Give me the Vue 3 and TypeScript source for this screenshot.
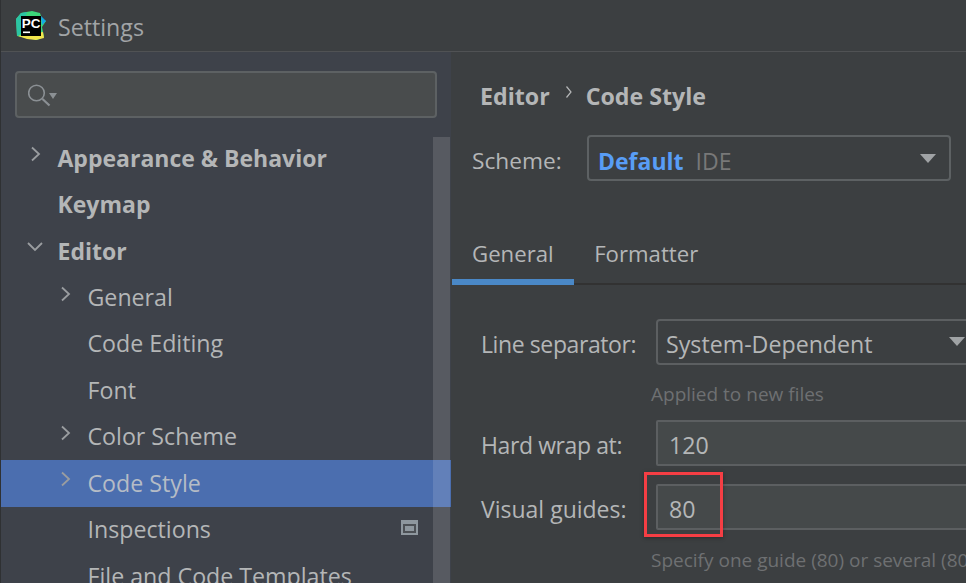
<script setup lang="ts">
interface NavItem { label: string; depth: number; bold?: boolean; arrow?: 'right' | 'down'; selected?: boolean; badge?: boolean }
const items: NavItem[] = [
  { label: 'Appearance & Behavior', depth: 0, bold: true, arrow: 'right' },
  { label: 'Keymap', depth: 0, bold: true },
  { label: 'Editor', depth: 0, bold: true, arrow: 'down' },
  { label: 'General', depth: 1, arrow: 'right' },
  { label: 'Code Editing', depth: 1 },
  { label: 'Font', depth: 1 },
  { label: 'Color Scheme', depth: 1, arrow: 'right' },
  { label: 'Code Style', depth: 1, arrow: 'right', selected: true },
  { label: 'Inspections', depth: 1, badge: true },
  { label: 'File and Code Templates', depth: 1 },
]
</script>

<template>
  <div class="window">
    <header class="titlebar">
      <svg class="logo" width="32" height="32" viewBox="0 0 32 32">
        <path d="M1 9 L6 3 L17 1 L25 3 L27 9 L31 11 L27 17 L29 27 L22 30 L12 28 L2 26 Z" fill="#3bd67a" />
        <path d="M1 9 L6 3 L12 2 L9 12 L6 24 L2 26 Z" fill="#2cc4a4" />
        <path d="M3 26 L14 24 L28 22 L29 28 L21 30 L12 29 Z" fill="#f2e44b" />
        <path d="M26 6 L31 11 L27 15 Z" fill="#12a8e8" />
        <rect x="6" y="6" width="20" height="20" fill="#000" />
        <text x="6.8" y="18" class="logo-text">PC</text>
        <rect x="8" y="21.5" width="7" height="1.6" fill="#fff" />
      </svg>
      <span class="title">Settings</span>
    </header>
    <div class="body">
      <aside class="sidebar">
        <div class="search">
          <svg width="30" height="24" viewBox="0 0 30 24" fill="none">
            <circle cx="8.5" cy="10" r="7.8" stroke="#8b9094" stroke-width="1.6" />
            <path d="M14.5 16 L21.5 22.5" stroke="#8b9094" stroke-width="2.2" />
            <path d="M21 10 H29 L25 16 Z" fill="#8b9094" />
          </svg>
        </div>
        <nav class="tree">
          <div v-for="item in items" :key="item.label" class="row" :class="{ selected: item.selected, bold: item.bold, nested: item.depth === 1 }">
            <span class="arrow">
              <svg v-if="item.arrow === 'right'" width="12" height="16" viewBox="0 0 12 16" fill="none"><path d="M2 1.5 L9 8 L2 14.5" stroke="#9a9da0" stroke-width="1.8" /></svg>
              <svg v-if="item.arrow === 'down'" class="down" width="16" height="12" viewBox="0 0 16 12" fill="none"><path d="M1 2 L8 9 L15 2" stroke="#9a9da0" stroke-width="1.8" /></svg>
            </span>
            <span class="label">{{ item.label }}</span>
            <span v-if="item.badge" class="badge"><i></i></span>
          </div>
        </nav>
        <div class="scrollbar"></div>
      </aside>
      <main class="content">
        <div class="crumbs">
          <span>Editor</span>
          <svg width="8" height="14" viewBox="0 0 8 14" fill="none"><path d="M1.5 1.5 L6 7 L1.5 12.5" stroke="#b5b7b8" stroke-width="1.2" /></svg>
          <span>Code Style</span>
        </div>
        <div class="scheme">
          <span class="scheme-label">Scheme:</span>
          <div class="scheme-box">
            <b>Default</b><span class="ide">IDE</span>
            <span class="caret"></span>
          </div>
        </div>
        <div class="tabs">
          <span class="tab active">General</span>
          <span class="tab">Formatter</span>
        </div>
        <section class="form">
          <label class="tight">Line separator:</label>
          <div class="field select">System-Dependent<span class="caret"></span></div>
          <p class="hint">Applied to new files</p>
          <label class="tight">Hard wrap at:</label>
          <div class="field input">120</div>
          <label class="visual">Visual guides:</label>
          <div class="field input visual">
            <span>80</span>
            <span class="highlight"></span>
          </div>
          <p class="hint last">Specify one guide (80) or several (80,</p>
        </section>
      </main>
    </div>
  </div>
</template>

<style>
html, body { margin: 0; height: 100%; overflow: hidden; background: #3c3f41; }
</style>

<style scoped>
.window {
  width: 966px; height: 583px; overflow: hidden; display: flex; flex-direction: column;
  background: #3c3f41; color: #b4b6b7; border-left: 1px solid #2f3133; box-sizing: border-box;
  font-family: "Open Sans", "Noto Sans", sans-serif; font-size: 23px;
}
.titlebar { height: 52px; flex: none; box-sizing: border-box; border-bottom: 1px solid #505254; display: flex; align-items: center; padding: 0 0 0 14px; }
.logo { flex: none; }
.logo-text { font: 700 13.5px "Liberation Sans", sans-serif; fill: #fff; }
.title { margin-left: 11px; font-size: 23.2px; color: #a2a5a7; margin-top: 2px; }
.body { flex: 1; display: flex; min-height: 0; }
.sidebar { width: 450px; flex: none; position: relative; background: #3e424a; padding-top: 19px; box-sizing: border-box; overflow: hidden; }
.search { margin-left: 14px; width: 422px; height: 47px; box-sizing: border-box; border: 2px solid #5d6163; border-radius: 4px; background: #494c4d; display: flex; align-items: center; padding-left: 11px; }
.tree { margin-top: 17px; }
.row { height: 46.45px; display: flex; align-items: center; position: relative; padding-left: 29px; white-space: nowrap; }
.row.nested { padding-left: 59px; font-size: 23.2px; }
.row.selected { background: #4b6eaf; }
.row.bold .label { font-weight: 700; margin-top: -1px; }
.arrow { width: 27.5px; flex: none; display: flex; align-items: center; margin-top: -8px; }
.down { margin-left: -3px; }
.label { color: #b4b6b7; margin-top: -1px; }
.selected .label { color: #b5bcc6; }
.badge { position: absolute; left: 400px; top: 13px; width: 17px; height: 15px; background: #8e979e; display: flex; align-items: flex-end; justify-content: center; padding-bottom: 2px; box-sizing: border-box; }
.badge i { display: block; width: 13px; height: 9px; box-sizing: border-box; background: #8e979e; border: 2px solid #4c5055; }
.scrollbar { position: absolute; left: 432px; top: 85px; width: 17px; bottom: 0; background: rgba(255, 255, 255, 0.13); }
.content { flex: 1; min-width: 0; padding-top: 26px; }
.crumbs { display: flex; align-items: center; padding-left: 29px; font-weight: 700; font-size: 23.2px; line-height: 36px; }
.crumbs svg { margin: -8px 13px 0 15px; }
.scheme { display: flex; align-items: center; padding-left: 21px; margin-top: 21px; }
.scheme-label { width: 115px; flex: none; font-size: 22.7px; padding-top: 5px; }
.scheme-box { width: 364px; height: 46px; box-sizing: border-box; border: 2px solid #5d6163; border-radius: 4px; position: relative; display: flex; align-items: center; padding: 5px 0 0 9px; }
.scheme-box b { color: #589df6; }
.ide { color: #787878; margin-left: 12px; }
.caret { position: absolute; right: 13px; top: 17px; width: 0; height: 0; border-left: 8px solid transparent; border-right: 8px solid transparent; border-top: 9px solid #a0a3a5; }
.tabs { margin-top: 52px; height: 52px; display: flex; border-bottom: 2px solid #323232; box-sizing: border-box; margin-left: 1px; font-size: 22.2px; }
.tab { padding: 0 20.5px 0 20px; line-height: 42px; }
.tab.active { position: relative; }
.tab.active::after { content: ""; position: absolute; left: 0; right: 0; bottom: -2px; height: 6px; background: #4a88c7; }
.form { display: grid; grid-template-columns: 175px 1fr; align-items: center; padding-left: 30px; margin-top: 34px; }
.field { height: 46px; box-sizing: border-box; border: 2px solid #5c5f61; display: flex; align-items: center; padding: 4px 0 0 8px; width: 330px; position: relative; font-size: 23.2px; }
.select { border-radius: 4px; }
.select .caret { right: 19px; top: 16px; }
.input { background: #45494a; padding-left: 11px; border-radius: 2px; }
.hint { grid-column: 2; margin: 14px 0 11px -5px; font-size: 19px; line-height: 30px; color: #6e7072; white-space: nowrap; }
label { white-space: nowrap; padding-top: 4px; }
label.tight { letter-spacing: -0.4px; }
label.visual, .field.visual { margin-top: 18px; }
.last { margin-top: 15px; }
.highlight { position: absolute; left: -14px; top: -14px; width: 79px; height: 65px; box-sizing: border-box; border: 3px solid #f53e44; box-shadow: 0 1px 4px rgba(0,0,0,0.35); }
</style>
